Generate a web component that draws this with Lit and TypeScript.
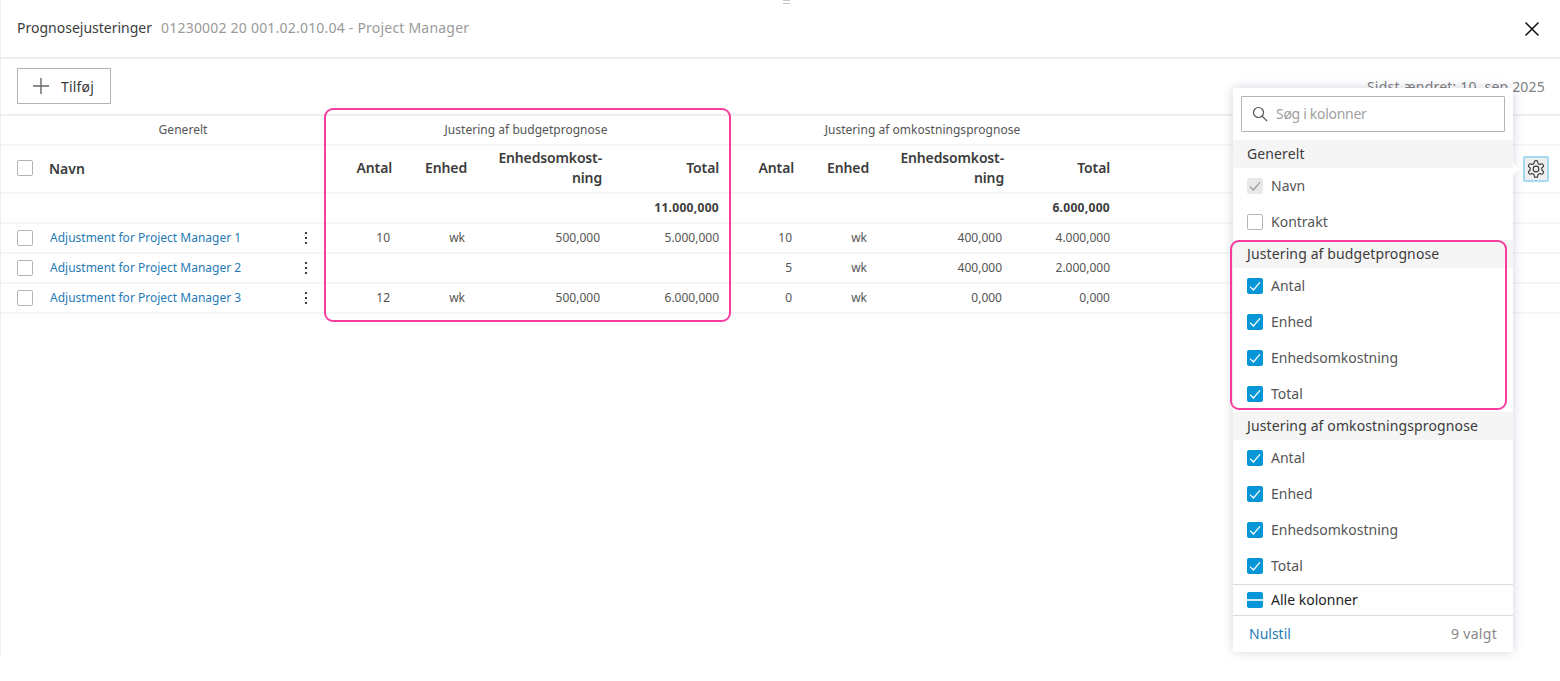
import { LitElement, html, css } from "lit";
import { customElement } from "lit/decorators.js";

const rows = [
  { n: "Adjustment for Project Manager 1", a: ["10", "wk", "500,000", "5.000,000"], b: ["10", "wk", "400,000", "4.000,000"] },
  { n: "Adjustment for Project Manager 2", a: ["", "", "", ""], b: ["5", "wk", "400,000", "2.000,000"] },
  { n: "Adjustment for Project Manager 3", a: ["12", "wk", "500,000", "6.000,000"], b: ["0", "wk", "0,000", "0,000"] },
];

const sections = [
  { t: "Generelt", items: [["Navn", "locked"], ["Kontrakt", "off"]] },
  { t: "Justering af budgetprognose", items: [["Antal", "on"], ["Enhed", "on"], ["Enhedsomkostning", "on"], ["Total", "on"]] },
  { t: "Justering af omkostningsprognose", items: [["Antal", "on"], ["Enhed", "on"], ["Enhedsomkostning", "on"], ["Total", "on"]] },
];

const check = (color: string) => html`<svg class="tick" viewBox="0 0 16 16" width="16" height="16"><path d="M3 8.6 6.4 12 13 4.4" fill="none" stroke=${color} stroke-width="1.3"/></svg>`;

@customElement("app-root")
export class AppRoot extends LitElement {
  static styles = css`
    :host { display: block; position: relative; width: 1560px; height: 681px; overflow: hidden; background: #fff;
      font-family: "Noto Sans", sans-serif; color: #3c3c3c; font-size: 14px; }
    .panel { height: 656px; border-left: 1px solid #eeeeee; box-sizing: border-box; }
    .head { height: 59px; box-sizing: border-box; border-bottom: 2px solid #eeeeee; display: flex; align-items: center; padding: 0 20px 2px 16px; gap: 9px; }
    .title { color: #3c3c3c; }
    .sub { color: #9a9a9a; flex: 1; letter-spacing: .21px; }
    .close { display: block; margin-top: 2px; }
    .bar { height: 57px; box-sizing: border-box; display: flex; align-items: center; justify-content: space-between; padding: 0 15px 1px 16px; border-bottom: 2px solid #eeeeee; }
    .add { width: 94px; height: 36px; box-sizing: border-box; border: 1px solid #b4b4b4; display: flex; align-items: center; gap: 12px; padding-left: 15px; color: #3c3c3c; letter-spacing: .2px; }
    .mod { color: #808080; margin-top: 1px; letter-spacing: .2px; }
    .r { display: grid; grid-template-columns: 40px 284px 75px 75px 135px 117px 75px 75px 135px 106px; align-items: center; border-bottom: 2px solid #f5f5f5; box-sizing: border-box; }
    .g { height: 30px; padding-bottom: 2px; grid-template-columns: 40px 284px 402px 391px; font-size: 12px; color: #555; text-align: center; letter-spacing: .03px; }
    .h { height: 48px; font-weight: 600; padding-bottom: 2px; }
    .h .n { text-align: right; padding-right: 8px; line-height: 20px; letter-spacing: -.15px; }
    .h .nm { padding-left: 8px; }
    .t { height: 30px; font-size: 12px; font-weight: 700; }
    .t .n { text-align: right; padding-right: 8px; letter-spacing: .3px; margin-top: -2px; }
    .d { height: 30px; font-size: 12px; color: #555; }
    .d .n { text-align: right; padding-right: 10px; margin-top: -2px; }
    .d .n.tot { padding-right: 8px; }
    .name { display: flex; align-items: center; justify-content: space-between; padding: 0 18px 0 9px; }
    .link { color: #1f7ab5; }
    .d .link { margin-top: -2px; }
    .keb { display: flex; flex-direction: column; gap: 3px; }
    .keb i { display: block; width: 2px; height: 2px; background: #3c3c3c; }
    .cb { width: 16px; height: 16px; box-sizing: border-box; border: 1px solid #b4b4b4; border-radius: 2px; background: #fff; flex: none; display: block; }
    .r > .cb { margin-left: 16px; }
    .cb.on { background: #0696d7; border: 0; }
    .cb.locked { background: #e8e8e8; border: 0; }
    .cb.part { background: #0696d7; border: 0; display: flex; align-items: center; justify-content: center; }
    .cb.part i { display: block; width: 16px; height: 2px; background: #cfeaf7; }
    .tick { display: block; }
    .handle { position: absolute; left: 783px; top: 0; width: 7px; height: 4px; border-top: 1px solid #c8c8c8; border-bottom: 1px solid #c8c8c8; box-sizing: border-box; }
    .gear { position: absolute; left: 1523px; top: 156px; width: 26px; height: 26px; box-sizing: border-box; background: #eeeeee; border: 2px solid #a5d9f2; border-radius: 2px; display: flex; align-items: center; justify-content: center; }
    .hl { position: absolute; border: 2px solid #f73c9f; border-radius: 9px; box-sizing: border-box; pointer-events: none; }
    .hl1 { left: 324px; top: 108px; width: 407px; height: 214px; }
    .hl2 { left: 1230px; top: 240px; width: 277px; height: 170px; }
    .pop { position: absolute; left: 1233px; top: 88px; width: 280px; height: 564px; background: #fff; box-shadow: 0 0 10px rgba(60,70,110,.22); display: flex; flex-direction: column; }
    .arrow { position: absolute; right: -7px; top: 75px; width: 0; height: 0; border-left: 7px solid #fff; border-top: 6px solid transparent; border-bottom: 6px solid transparent; }
    .search { margin: 8px 8px 8px; height: 36px; box-sizing: border-box; flex: none; border: 1px solid #b4b4b4; border-radius: 1px; display: flex; align-items: center; gap: 8px; padding-left: 10px; color: #a0a0a0; }
    .search span { margin-top: -2px; letter-spacing: -.3px; }
    .sec { height: 28px; flex: none; background: #f5f5f5; display: flex; align-items: center; padding: 0 0 2px 14px; box-sizing: border-box; color: #3c3c3c; letter-spacing: .12px; }
    .item { height: 36px; flex: none; display: flex; align-items: center; gap: 8px; padding-left: 14px; color: #555; }
    .item .lb, .all .lb { margin-top: -2px; }
    .all { height: 32px; flex: none; box-sizing: border-box; border-top: 1px solid #dcdcdc; border-bottom: 1px solid #dcdcdc; display: flex; align-items: center; gap: 8px; padding-left: 14px; color: #222; }
    .foot { flex: 1; display: flex; align-items: center; justify-content: space-between; padding: 0 16px 2px; }
    .foot .link { font-size: 14px; }
    .count { color: #888; letter-spacing: .3px; }
  `;

  render() {
    return html`
      <div class="panel">
        <div class="head">
          <span class="title">Prognosejusteringer</span>
          <span class="sub">01230002 20 001.02.010.04 - Project Manager</span>
          <svg class="close" width="16" height="16" viewBox="0 0 16 16"><path d="M1.5 1.5 14.5 14.5M14.5 1.5 1.5 14.5" stroke="#111" stroke-width="1.5" fill="none"/></svg>
        </div>
        <div class="bar">
          <div class="add">
            <svg width="16" height="16" viewBox="0 0 16 16"><path d="M8 0V16M0 8H16" stroke="#666" stroke-width="1.4" fill="none"/></svg>
            <span>Tilføj</span>
          </div>
          <span class="mod">Sidst ændret: 10. sep 2025</span>
        </div>
        <div class="r g"><span></span><span>Generelt</span><span>Justering af budgetprognose</span><span>Justering af omkostningsprognose</span></div>
        <div class="r h">
          <span class="cb"></span><span class="nm">Navn</span>
          ${[0, 1].map(() => html`
            <span class="n">Antal</span><span class="n">Enhed</span><span class="n">Enhedsomkost-<br />ning</span><span class="n">Total</span>`)}
        </div>
        <div class="r t">
          <span></span><span></span><span></span><span></span><span></span><span class="n">11.000,000</span>
          <span></span><span></span><span></span><span class="n">6.000,000</span>
        </div>
        ${rows.map((r) => html`
          <div class="r d">
            <span class="cb"></span>
            <span class="name"><span class="link">${r.n}</span><span class="keb"><i></i><i></i><i></i></span></span>
            ${[...r.a, ...r.b].map((v, i) => html`<span class="n ${i % 4 === 3 ? "tot" : ""}">${v}</span>`)}
          </div>`)}
      </div>

      <div class="handle"></div>
      <div class="hl hl1"></div>

      <div class="gear">
        <svg width="20" height="20" viewBox="0 0 24 24" fill="none" stroke="#3c3c3c" stroke-width="1.4"><path d="M12.22 2h-.44a2 2 0 0 0-2 2v.18a2 2 0 0 1-1 1.73l-.43.25a2 2 0 0 1-2 0l-.15-.08a2 2 0 0 0-2.73.73l-.22.38a2 2 0 0 0 .73 2.73l.15.1a2 2 0 0 1 1 1.72v.51a2 2 0 0 1-1 1.74l-.15.09a2 2 0 0 0-.73 2.73l.22.38a2 2 0 0 0 2.73.73l.15-.08a2 2 0 0 1 2 0l.43.25a2 2 0 0 1 1 1.73V20a2 2 0 0 0 2 2h.44a2 2 0 0 0 2-2v-.18a2 2 0 0 1 1-1.73l.43-.25a2 2 0 0 1 2 0l.15.08a2 2 0 0 0 2.73-.73l.22-.39a2 2 0 0 0-.73-2.73l-.15-.08a2 2 0 0 1-1-1.74v-.5a2 2 0 0 1 1-1.74l.15-.09a2 2 0 0 0 .73-2.73l-.22-.38a2 2 0 0 0-2.73-.73l-.15.08a2 2 0 0 1-2 0l-.43-.25a2 2 0 0 1-1-1.73V4a2 2 0 0 0-2-2z"/><circle cx="12" cy="12" r="3.4"/></svg>
      </div>

      <div class="pop">
        <span class="arrow"></span>
        <div class="search">
          <svg width="16" height="16" viewBox="0 0 16 16" fill="none" stroke="#555" stroke-width="1.2"><circle cx="6.5" cy="6.5" r="5"/><path d="M10.2 10.2 15 15"/></svg>
          <span>Søg i kolonner</span>
        </div>
        ${sections.map((s) => html`
          <div class="sec">${s.t}</div>
          ${s.items.map(([label, st]) => html`
            <div class="item">
              <span class="cb ${st}">${st === "on" ? check("#fff") : st === "locked" ? check("#9a9a9a") : ""}</span>
              <span class="lb">${label}</span>
            </div>`)}`)}
        <div class="all"><span class="cb part"><i></i></span><span class="lb">Alle kolonner</span></div>
        <div class="foot"><span class="link">Nulstil</span><span class="count">9 valgt</span></div>
      </div>
      <div class="hl hl2"></div>
    `;
  }
}
